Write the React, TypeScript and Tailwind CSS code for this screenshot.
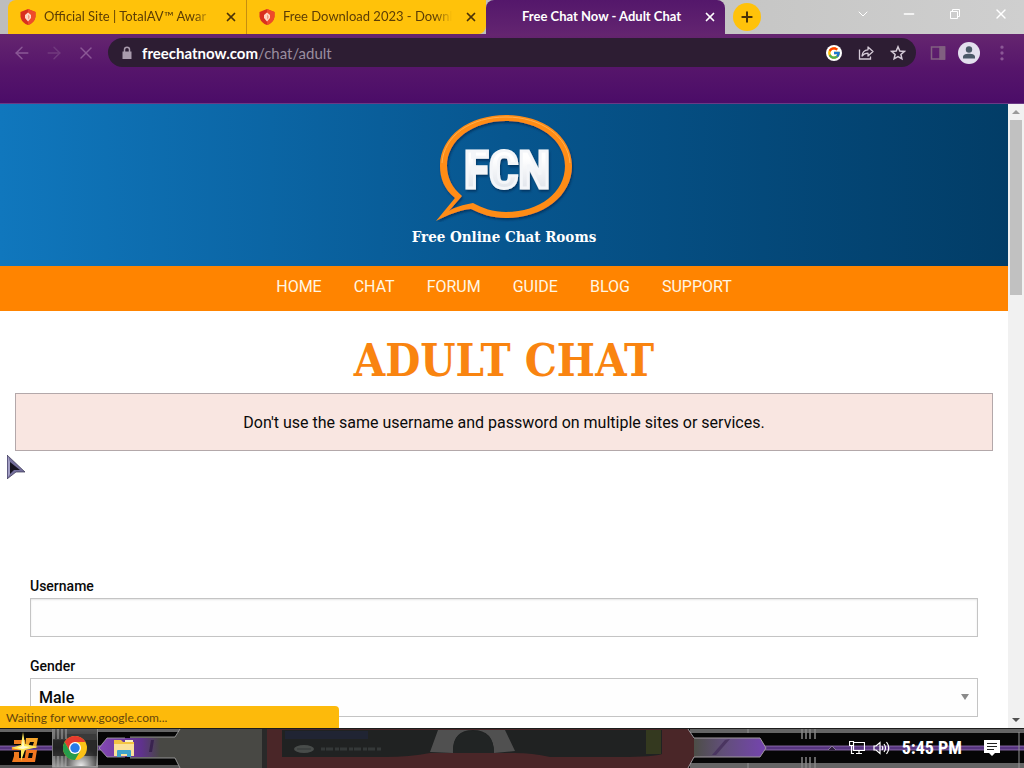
import React from 'react';
import { FcGoogle } from 'react-icons/fc';
import { ArrowLeft, ArrowRight, ChevronDown, Minus, MoreVertical, Plus, X } from 'lucide-react';

interface TabProps {
  title: string;
  active?: boolean;
}

const navItems = ['Home', 'Chat', 'Forum', 'Guide', 'Blog', 'Support'];

const ShieldIcon = () => (
  <svg viewBox="0 0 16 16" className="w-4 h-4 shrink-0">
    <path d="M8 0 L15.500 3 V7.500 C15 12 11.500 15 8 16 C4.500 15 1 12 0.500 7.500 V3 Z" fill="#d9301f" />
    <path d="M8 0 L15.500 3 V7.500 C15 12 11.500 15 8 16 Z" fill="#ee4b2b" />
    <path d="M8 3.500 L11 6 V9 L8 12.500 L5 9 V6 Z" fill="#ffd9c4" />
    <path d="M8 5.500 L9.500 7 V9 L8 10.500 Z" fill="#f0a080" />
  </svg>
);

const Tab: React.FC<TabProps> = ({ title, active }) => {
  if (active) {
    return (
      <div className="flex-1 min-w-0 max-w-[239px] flex items-center pl-9 pr-1 rounded-t-lg bg-gradient-to-b from-[#54176b] to-[#632470] text-white">
        <span className="flex-1 min-w-0 whitespace-nowrap text-[13px] font-bold">{title}</span>
        <button aria-label="Close tab" className="p-1">
          <X className="w-3.5 h-3.5" strokeWidth={3} />
        </button>
      </div>
    );
  }
  return (
    <div className="flex-1 min-w-0 max-w-[239px] flex items-center gap-2 pl-3 pr-1 bg-[#ffc20a] text-[#5c3d05] border-r border-[#c68e10] first:rounded-tl-lg nth-2:rounded-br-lg nth-2:border-r-0">
      <ShieldIcon />
      <span className="flex-1 min-w-0 whitespace-nowrap text-[13px] mask-r-from-90% mask-r-to-100%">{title}</span>
      <button aria-label="Close tab" className="p-1 text-[#4a3208]">
        <X className="w-3.5 h-3.5" strokeWidth={3} />
      </button>
    </div>
  );
};

const TabStrip = () => (
  <div className="h-[34px] flex pl-2 bg-gradient-to-r from-[#bdbdbd] via-[#bfbfbd] to-[#cfcfcf]">
    <div className="flex flex-1 min-w-0">
      <Tab title="Official Site | TotalAV™ Awar" />
      <Tab title="Free Download 2023 - Downloa" />
      <Tab title="Free Chat Now - Adult Chat" active />
      <div className="pl-2 pt-[3px]">
        <button aria-label="New tab" className="w-7 h-7 rounded-full bg-[#ffc20a] flex items-center justify-center text-[#4a3208]">
          <Plus className="w-4 h-4" strokeWidth={3} />
        </button>
      </div>
    </div>
    <div className="flex items-center h-7 text-white">
      <button aria-label="Search tabs" className="w-[46px] flex justify-center">
        <ChevronDown className="w-4 h-4" strokeWidth={1.5} />
      </button>
      <button aria-label="Minimize" className="w-[46px] flex justify-center">
        <Minus className="w-4 h-4" strokeWidth={2} />
      </button>
      <button aria-label="Restore" className="w-[46px] flex justify-center">
        <svg viewBox="0 0 12 12" className="w-3 h-3" fill="none" stroke="currentColor">
          <path d="M1.500 3.500 H8.500 V10.500 H1.500 Z" />
          <path d="M3.500 3.500 V1.500 H10.500 V8.500 H8.500" />
        </svg>
      </button>
      <button aria-label="Close" className="w-[46px] flex justify-center">
        <X className="w-4 h-4" strokeWidth={2} />
      </button>
    </div>
  </div>
);

const Toolbar = () => (
  <div className="h-[70px] pt-1 bg-gradient-to-b from-[#65256f] via-[#56156b] to-[#4b0c68] border-b border-[#6a3a86]">
    <div className="flex items-center pl-3 pr-3 text-[#8b5896]">
      <button aria-label="Back" className="w-8">
        <ArrowLeft className="w-5 h-5" strokeWidth={1.75} />
      </button>
      <button aria-label="Forward" className="w-8 text-[#713a7e]">
        <ArrowRight className="w-5 h-5" strokeWidth={1.75} />
      </button>
      <button aria-label="Stop loading" className="w-8">
        <X className="w-5 h-5" strokeWidth={1.75} />
      </button>
      <div className="flex-1 min-w-0 h-[29px] flex items-center rounded-full bg-[#2d1d33] pl-3 pr-2.5 gap-4 text-[#d5cbd8]">
        <div className="flex-1 min-w-0 flex items-center gap-2">
          <svg viewBox="0 0 14 14" className="w-3.5 h-3.5" fill="#a99bad">
            <path d="M2.500 5.500 H11.500 V13 H2.500 Z" />
            <path d="M4.500 6 V3.500 C4.500 0.500 9.500 0.500 9.500 3.500 V6" fill="none" stroke="#a99bad" strokeWidth="1.500" />
          </svg>
          <span className="text-[15px] leading-5 text-[#9a8d9f]">
            <span className="text-white font-bold">freechatnow.com</span>/chat/adult
          </span>
        </div>
        <button aria-label="Google" className="w-4 h-4 rounded-full bg-white flex items-center justify-center">
          <FcGoogle className="w-3.5 h-3.5" />
        </button>
        <button aria-label="Share">
          <svg viewBox="0 0 16 16" className="w-4 h-4" fill="none" stroke="currentColor" strokeWidth="1.300">
            <path d="M1.500 4.500 V14 H12.500 V11.500" />
            <path d="M4 11 C4.300 7 6.500 5 10 4.800 V2 L15 6.500 L10 11 V8.200 C7.500 8.200 5.500 9 4 11 Z" strokeLinejoin="round" />
          </svg>
        </button>
        <button aria-label="Bookmark this tab">
          <svg viewBox="0 0 16 16" className="w-4 h-4" fill="none" stroke="currentColor" strokeWidth="1.500">
            <path d="M8 1.800 L9.800 6 L14.300 6.400 L10.900 9.400 L11.900 13.800 L8 11.500 L4.100 13.800 L5.100 9.400 L1.700 6.400 L6.200 6 Z" />
          </svg>
        </button>
      </div>
      <div className="flex items-center gap-3 pl-3.5">
        <button aria-label="Side panel">
          <svg viewBox="0 0 16 16" className="w-4 h-4" fill="none" stroke="#816080" strokeWidth="1.500">
            <path d="M1.500 2 H14.500 V14 H1.500 Z" />
            <path d="M10 2 H14.500 V14 H10 Z" fill="#816080" />
          </svg>
        </button>
        <button aria-label="Profile" className="w-[22px] h-[22px] rounded-full bg-[#e3e0ee] flex items-center justify-center">
          <svg viewBox="0 0 16 16" className="w-4 h-4" fill="#4b5a68">
            <circle cx="8" cy="4.500" r="3.200" />
            <path d="M2 13.500 V12 C2 9.500 5 8.800 8 8.800 S14 9.500 14 12 V13.500 Z" />
          </svg>
        </button>
        <button aria-label="Menu">
          <MoreVertical className="w-5 h-5" strokeWidth={2} />
        </button>
      </div>
    </div>
  </div>
);

const Logo = () => (
  <svg viewBox="0 0 140 110" className="w-[140px] h-[110px]" role="img" aria-label="FCN">
    <defs>
      <linearGradient id="letters" x1="0" y1="0" x2="0" y2="1">
        <stop offset="0.300" stopColor="#ffffff" />
        <stop offset="1" stopColor="#d5dae3" />
      </linearGradient>
      <filter id="shadow" x="-10%" y="-10%" width="125%" height="125%">
        <feDropShadow dx="1" dy="2" stdDeviation="1.200" floodColor="#032c52" floodOpacity="0.700" />
      </filter>
    </defs>
    <g filter="url(#shadow)">
      <path
        fillRule="evenodd"
        fill="#ff8c14"
        d="M2 109 L21 86 C10 77 6 66 6 54 C6 24 35 3 72 3 C109 3 138 24 138 54 C138 84 109 106 72 106 C58 106 47 102 37 97 C25 98 14 103 2 109 Z
           M15 99 C21 95 29 93 39 91 C48 96 59 100 72 100 C106 100 131 80 131 54 C131 28 105 9 72 9 C39 9 13 28 13 54 C13 65 18 76 28 84 Z"
      />
      <path fill="none" stroke="#ffb04d" strokeWidth="1" d="M8 51 C10 23 37 5 72 5 C107 5 134 24 136 51" />
    </g>
    <text
      x="73"
      y="76"
      textAnchor="middle"
      className="font-['Roboto_Condensed','Liberation_Sans',sans-serif] font-bold text-[52px]"
      fill="url(#letters)"
      stroke="#f4f6f9"
      strokeWidth="3"
      filter="url(#shadow)"
    >
      FCN
    </text>
  </svg>
);

const ScrollBar = () => (
  <div className="w-4 shrink-0 flex flex-col items-center bg-[#f1f1f1]">
    <div className="h-4 flex items-center">
      <svg viewBox="0 0 8 4" className="w-2 h-1" fill="#9a9a9a"><path d="M0 4 L4 0 L8 4 Z" /></svg>
    </div>
    <div className="w-3 h-[175px] bg-[#c1c1c1]"></div>
    <div className="flex-1"></div>
    <div className="h-[17px] flex items-center">
      <svg viewBox="0 0 8 4" className="w-2 h-1" fill="#505050"><path d="M0 0 L4 4 L8 0 Z" /></svg>
    </div>
  </div>
);

const Page = () => (
  <div className="flex-1 min-w-0 overflow-hidden font-[Roboto,sans-serif] text-[#0a0a0a]">
    <header className="h-[162px] pt-2 flex flex-col items-center bg-gradient-to-r from-[#1077bd] via-[#07568f] to-[#023d67]">
      <Logo />
      <p className="mt-[3px] font-['Roboto_Slab','DejaVu_Serif_Condensed','DejaVu_Serif',serif] font-bold text-[15px] leading-6 text-white">Free Online Chat Rooms</p>
    </header>
    <nav className="h-[45px] pt-[9px] flex justify-center gap-8 bg-[#ff8400]">
      {navItems.map((item) => (
        <a key={item} href="#" className="text-base leading-6 uppercase text-[#fff6e4]">{item}</a>
      ))}
    </nav>
    <main className="px-[15px]">
      <h1 className="pt-[21px] pb-[3px] text-center uppercase font-['Roboto_Slab','DejaVu_Serif_Condensed','DejaVu_Serif',serif] font-bold text-[45px] leading-[58px] text-[#f98410]">
        Adult Chat
      </h1>
      <div className="h-[58px] pt-px flex items-center justify-center border border-[#b3a8aa] bg-[#f9e6e1] text-base">
        Don't use the same username and password on multiple sites or services.
      </div>
      <form className="px-[15px] pt-[123px]">
        <label htmlFor="username" className="block text-sm leading-6 font-medium">Username</label>
        <input id="username" type="text" className="block w-full h-[39px] border border-[#c4c4c4] bg-[#fefefe] px-2 shadow-[inset_0_1px_2px_rgba(10,10,10,0.1)]" />
        <label htmlFor="gender" className="block mt-[17px] text-sm leading-6 font-medium">Gender</label>
        <div className="relative">
          <select id="gender" className="block w-full h-[39px] appearance-none border border-[#c4c4c4] bg-[#fefefe] px-2 text-base font-medium">
            <option>Male</option>
            <option>Female</option>
          </select>
          <svg viewBox="0 0 8 6" className="absolute right-[9px] top-4 w-2 h-1.5 pointer-events-none" fill="#8a8a8a"><path d="M0 0 H8 L4 6 Z" /></svg>
        </div>
      </form>
    </main>
  </div>
);

const Cursor = () => (
  <svg viewBox="0 0 18 24" className="absolute left-[7px] top-[351px] w-[18px] h-6">
    <path d="M0 0 L18 17 L9 17 L0 24 Z" fill="#75709d" stroke="#35314e" strokeWidth="0.700" />
    <path d="M3 7 L13 15 L7 15 L3 19 Z" fill="#15121f" />
    <path d="M1 1 L3 7 V19 L1 22 Z" fill="#a39fc4" />
  </svg>
);

const TaskbarArt = () => (
  <svg viewBox="0 0 1024 40" preserveAspectRatio="none" className="absolute inset-0 w-full h-full">
    <defs>
      <linearGradient id="hexLeft"><stop offset="0" stopColor="#8549b5" /><stop offset="0.700" stopColor="#5f328c" /><stop offset="1" stopColor="#484844" /></linearGradient>
      <linearGradient id="hexRight"><stop offset="0" stopColor="#4d4e47" /><stop offset="0.400" stopColor="#614f78" /><stop offset="1" stopColor="#7544b0" /></linearGradient>
      <linearGradient id="button" x1="0" y1="0" x2="0" y2="1"><stop offset="0" stopColor="#555" /><stop offset="0.500" stopColor="#222" /><stop offset="1" stopColor="#999" /></linearGradient>
      <radialGradient id="glow" cx="0.500" cy="1" r="0.600"><stop offset="0" stopColor="#eee" /><stop offset="1" stopColor="#3a3a3a" /></radialGradient>
    </defs>
    <rect width="1024" height="40" fill="#060606" />
    <path d="M0 1 H180 V4 H0 Z M690 1 H1024 V5 H690 Z M690 35 H1024 V40 H690 Z" fill="#656565" />
    <path d="M0 37 H180 V40 H0 Z" fill="#555" />
    <path d="M0 18 H104 V22 H0 Z M764 18 H1024 V22 H764 Z" fill="#573580" />
    <path d="M0 18 H104 M0 22 H104 M764 18 H1024 M764 22 H1024" stroke="#9a79b9" strokeWidth="0.800" />
    <path d="M130 9 H175 L180 1 H264 V40 H180 L175 30 H130 Z" fill="#484844" />
    <path d="M99 20 L107 10 H160 V29 H107 Z" fill="url(#hexLeft)" />
    <path d="M151 12 H154 L152 24 H149 Z" fill="#39234f" />
    <path d="M99 20 L107 10 H125 M99 20 L107 29 H125 M130 9 H175 L180 1 M130 30 H175 L180 40" fill="none" stroke="#a9a9a9" strokeWidth="0.800" />
    <rect x="262" y="1" width="5" height="39" fill="#292929" />
    <path d="M267 1 H688 L694 11 V29 L688 40 H267 Z" fill="#4a2628" />
    <path d="M282 2 H662 V26 Q655 29 620 29 H550 Q532 25 515 25 H430 Q410 29 385 29 H282 Z" fill="#202222" />
    <path d="M285 3 H368 V11 H285 Z" fill="#202433" />
    <path d="M646 2 H661 V26 H646 Z" fill="#34391f" />
    <ellipse cx="304" cy="21" rx="10" ry="4" fill="#484c4a" />
    <path d="M297 21 H311" stroke="#333737" />
    <path d="M321 21 H382" stroke="#343838" strokeWidth="3" strokeDasharray="4 1 7 2" />
    <path d="M430 24 L438 2 H505 L515 23 L494 25 Q494 2 473 2 Q452 2 453 25 Z" fill="#505050" />
    <path d="M453 25 Q452 3 473 3 Q494 3 494 25 Z" fill="#212424" />
    <path d="M694 10 H760 L766 20 L760 29 H694 Z" fill="url(#hexRight)" />
    <path d="M712 27 L725 12 L730 11 L716 27 Z" fill="#4a3560" />
    <path d="M688 1 L694 10 H760 L766 20 L760 29 H694 L688 40" fill="none" stroke="#a19a9f" />
    <path d="M802 0 V11 M806 0 V11 M810 0 V11 M815 0 V11 M802 29 V40 M806 29 V40 M810 29 V40 M815 29 V40" stroke="#858585" strokeWidth="1.500" />
    <path d="M748 0 V5 M748 35 V40 M1019 4 V40" stroke="#949494" />
    <rect x="52" y="1" width="46" height="38" fill="url(#button)" />
    <rect x="66" y="6" width="30" height="32" fill="url(#glow)" />
    <path d="M54 1 V11 M58 1 V11 M62 1 V11 M66 1 V11 M54 28 V39 M58 28 V39 M62 28 V39 M66 28 V39" stroke="#aaa" />
    <rect x="53" y="12" width="44" height="16" fill="#222" fillOpacity="0.700" />
    <path d="M52.500 1 V39.500 H97.500 V1" fill="none" stroke="#999" strokeWidth="0.700" />
    <path d="M0 0.500 H1024" stroke="#1c1c1c" />
  </svg>
);

const StartIcon = () => (
  <svg viewBox="0 0 28 32" className="w-7 h-8">
    <path d="M3 8 H14 V12 H3 Z M1 15 H14 V18 H1 Z M3 20 H8 V26 H14 V30 H1 L3 24 Z" fill="#ef7a1e" />
    <path d="M15 6 H27 L25 16 H21 L23 10 H19 L17 15 H14 Z" fill="#f5a52a" />
    <path d="M15 18 H26 L24 30 H13 Z M18 21 L17 26 H21 L22 21 Z" fillRule="evenodd" fill="#f27720" />
    <path d="M12 0 L14 12 L27 15 L14 18 L10 29 L10 18 L0 16 L10 13 Z" fill="#ffe75a" />
    <path d="M12 6 L13 14 L19 15 L12 17 L6 16 L11 14 Z" fill="#fffbd0" />
  </svg>
);

const ChromeIcon = () => (
  <svg viewBox="0 0 24 24" className="w-6 h-6">
    <circle cx="12" cy="12" r="12" fill="#fbc116" />
    <path d="M1.600 6 A12 12 0 0 1 22.400 6 H12 L6.800 15 Z" fill="#e63b2e" />
    <path d="M1.600 6 A12 12 0 0 0 12 24 L17.200 15 L12 18 L6.800 15 Z" fill="#269b4b" />
    <circle cx="12" cy="12" r="6" fill="#fff" />
    <circle cx="12" cy="12" r="4.700" fill="#277be8" />
  </svg>
);

const FolderIcon = () => (
  <svg viewBox="0 0 22 19" className="w-[22px] h-[19px]">
    <path d="M1 1 H8 L10 3 H21 V17 H1 Z" fill="#f4c542" />
    <path d="M1 5 H21 V17 H1 Z" fill="#fbe29a" />
    <path d="M12 1 H20 V3 H12 Z" fill="#f9efc6" />
    <path d="M4 18 V12 Q4 11 5 11 H17 Q18 11 18 12 V18 H14 V15 H8 V18 Z" fill="#3ea3c9" />
  </svg>
);

const Taskbar = () => (
  <footer className="relative h-10 shrink-0 bg-black">
    <TaskbarArt />
    <div className="relative h-full flex items-center text-white">
      <button aria-label="Start" className="w-[50px] flex justify-center">
        <StartIcon />
      </button>
      <button aria-label="Google Chrome" className="w-[50px] flex justify-center">
        <ChromeIcon />
      </button>
      <button aria-label="File Explorer" className="w-12 flex justify-center">
        <FolderIcon />
      </button>
      <div className="ml-auto flex items-center pr-6">
        <button aria-label="Show hidden icons" className="mr-3">
          <svg viewBox="0 0 10 6" className="w-2.5 h-1.5" fill="#302040" stroke="#8b7b9d"><path d="M1 5 L5 1 L9 5" /></svg>
        </button>
        <button aria-label="Network" className="mr-2">
          <svg viewBox="0 0 16 14" className="w-4 h-3.5" fill="none" stroke="currentColor" strokeWidth="1.200">
            <path d="M5 1.500 H15.500 V9.500 H4.500 V5 M10 9.500 V12.500 M7 12.500 H13" />
            <path d="M0.500 0.500 H4.500 V4.500 H0.500 Z M2.500 4.500 V12.500 H5" />
          </svg>
        </button>
        <button aria-label="Volume" className="mr-3">
          <svg viewBox="0 0 17 14" className="w-[17px] h-3.5" fill="none" stroke="currentColor" strokeWidth="1.200">
            <path d="M1 5 H3 L7 1.500 V12.500 L3 9 H1 Z" />
            <path d="M9 5 Q10.500 7 9 9 M11 3 Q14 7 11 11 M13.500 1 Q18 7 13.500 13" />
          </svg>
        </button>
        <time className="font-['Roboto_Condensed','Liberation_Sans',sans-serif] font-bold text-lg leading-8 mr-[22px]">5:45 PM</time>
        <button aria-label="Notifications">
          <svg viewBox="0 0 16 16" className="w-4 h-4">
            <path d="M0 0 H16 V13 H11 L8 16 L5 13 H0 Z" fill="#fff" />
            <path d="M3 3.500 H13 M3 6.500 H13 M3 9.500 H10" stroke="#222" />
          </svg>
        </button>
      </div>
    </div>
  </footer>
);

const App = () => {
  return (
    <div className="h-screen flex flex-col overflow-hidden bg-white font-[Lato,sans-serif]">
      <TabStrip />
      <Toolbar />
      <div className="relative flex-1 min-h-0 flex">
        <Page />
        <ScrollBar />
        <Cursor />
        <div className="absolute left-0 bottom-0 w-[339px] max-w-full h-[22px] px-1.5 rounded-tr bg-[#fdba0b] text-[#65460b] text-xs leading-[23px]">
          Waiting for www.google.com...
        </div>
      </div>
      <Taskbar />
    </div>
  );
};

export default App;
